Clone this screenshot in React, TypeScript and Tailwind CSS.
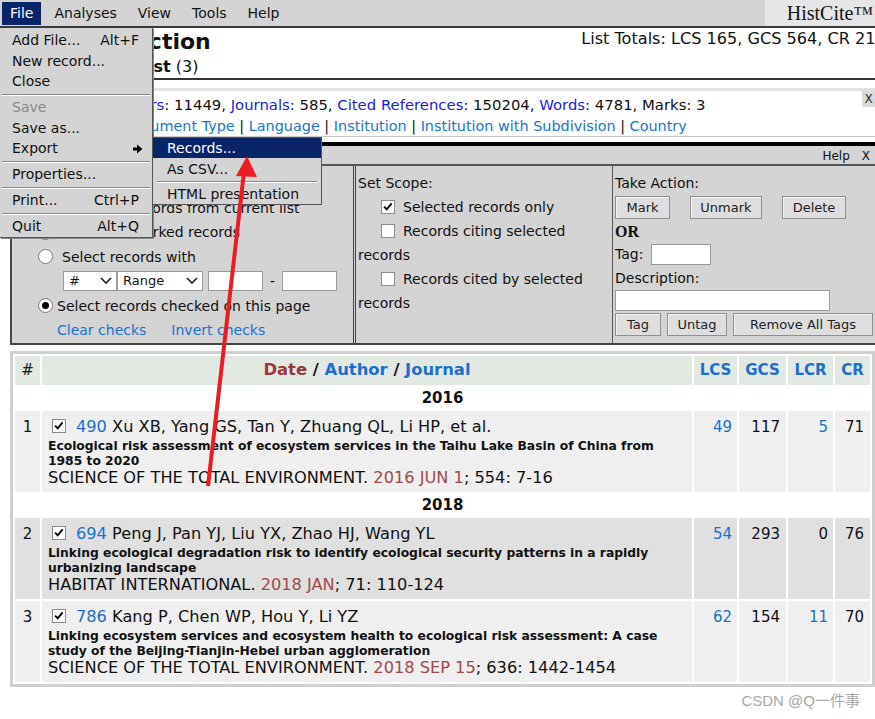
import React from "react";

type Rec = {
  n: number;
  id: string;
  authors: string;
  title: string[];
  journal: string;
  date: string;
  rest: string;
  lcs: string;
  gcs: string;
  lcr: string;
  lcrLink: boolean;
  cr: string;
  bg: string;
};

const years: { year: string; recs: Rec[] }[] = [
  {
    year: "2016",
    recs: [
      {
        n: 1,
        id: "490",
        authors: "Xu XB, Yang GS, Tan Y, Zhuang QL, Li HP, et al.",
        title: [
          "Ecological risk assessment of ecosystem services in the Taihu Lake Basin of China from",
          "1985 to 2020",
        ],
        journal: "SCIENCE OF THE TOTAL ENVIRONMENT.",
        date: "2016 JUN 1",
        rest: "; 554: 7-16",
        lcs: "49",
        gcs: "117",
        lcr: "5",
        lcrLink: true,
        cr: "71",
        bg: "bg-[#efefef]",
      },
    ],
  },
  {
    year: "2018",
    recs: [
      {
        n: 2,
        id: "694",
        authors: "Peng J, Pan YJ, Liu YX, Zhao HJ, Wang YL",
        title: [
          "Linking ecological degradation risk to identify ecological security patterns in a rapidly",
          "urbanizing landscape",
        ],
        journal: "HABITAT INTERNATIONAL.",
        date: "2018 JAN",
        rest: "; 71: 110-124",
        lcs: "54",
        gcs: "293",
        lcr: "0",
        lcrLink: false,
        cr: "76",
        bg: "bg-[#e0e0e0]",
      },
      {
        n: 3,
        id: "786",
        authors: "Kang P, Chen WP, Hou Y, Li YZ",
        title: [
          "Linking ecosystem services and ecosystem health to ecological risk assessment: A case",
          "study of the Beijing-Tianjin-Hebei urban agglomeration",
        ],
        journal: "SCIENCE OF THE TOTAL ENVIRONMENT.",
        date: "2018 SEP 15",
        rest: "; 636: 1442-1454",
        lcs: "62",
        gcs: "154",
        lcr: "11",
        lcrLink: true,
        cr: "70",
        bg: "bg-[#efefef]",
      },
    ],
  },
];

function Check({ checked = false }: { checked?: boolean }) {
  return (
    <span className="inline-flex h-[14px] w-[14px] shrink-0 items-center justify-center border border-[#8c8c8c] bg-white">
      {checked && (
        <svg viewBox="0 0 14 14" className="h-[12px] w-[12px]">
          <path d="M2.5 6.5 L5.5 9.8 L11.2 2.8" fill="none" stroke="#000" strokeWidth="2.2" />
        </svg>
      )}
    </span>
  );
}

function Radio({ checked = false }: { checked?: boolean }) {
  return (
    <span className="inline-flex h-[15px] w-[15px] shrink-0 items-center justify-center rounded-full border border-[#7a7a7a] bg-white">
      {checked && <span className="h-[7px] w-[7px] rounded-full bg-black" />}
    </span>
  );
}

function Btn({ children, w }: { children: React.ReactNode; w: string }) {
  return (
    <span
      className={`inline-flex h-[23px] items-center justify-center border border-[#8f8f8f] bg-[#dedede] text-[13px] text-[#222] shadow-[inset_1px_1px_0_#f4f4f4] ${w}`}
    >
      {children}
    </span>
  );
}

function Select({ label, w }: { label: string; w: string }) {
  return (
    <span className={`flex h-[20px] items-center justify-between border border-[#9a9a9a] bg-white pl-[5px] pr-[4px] text-[13px] ${w}`}>
      {label}
      <svg viewBox="0 0 12 8" className="h-[8px] w-[12px]">
        <path d="M1 1 L6 6 L11 1" fill="none" stroke="#222" strokeWidth="1.6" />
      </svg>
    </span>
  );
}

function MenuItem({ label, keys, dim, arrow }: { label: string; keys?: string; dim?: boolean; arrow?: boolean }) {
  return (
    <div className={`flex h-[20.5px] items-center justify-between pl-[12px] pr-[13px] ${dim ? "text-[#8a8a8a]" : "text-[#111]"}`}>
      <span>{label}</span>
      {keys && <span>{keys}</span>}
      {arrow && (
        <svg viewBox="0 0 10 10" className="-mr-[4px] h-[10px] w-[10px]">
          <path d="M0 3.5 H4 V0.5 L9.5 5 L4 9.5 V6.5 H0 Z" fill="#000" />
        </svg>
      )}
    </div>
  );
}

function Sep() {
  return <div className="mx-[2px] my-[1.75px] h-[2px] border-t border-b border-t-[#8a8a8a] border-b-white" />;
}

export default function App() {
  return (
    <div className="relative h-[719px] w-[875px] overflow-hidden bg-white font-['DejaVu_Sans',Verdana,sans-serif] text-[#111]">
      {/* menu bar */}
      <div className="flex h-[28px] border-b-2 border-[#3a3a3a] bg-[#d4d4d4] text-[14px]">
        <div className="flex items-center gap-[5px] pl-[2px]">
          <span className="flex h-[23px] items-center bg-[#0a246a] px-[8px] text-white">File</span>
          <span className="px-[8px]">Analyses</span>
          <span className="px-[8px]">View</span>
          <span className="px-[8px]">Tools</span>
          <span className="px-[8px]">Help</span>
        </div>
        <div className="ml-auto flex w-[110px] items-center justify-end bg-[#e6e6e6] pr-[2px] font-['Liberation_Serif',serif] text-[20px]">
          HistCite™
        </div>
      </div>

      {/* title */}
      <div className="flex h-[52px] justify-between border-b-2 border-[#333] pl-[20px]">
        <div>
          <div className="text-[22px] font-bold leading-[27px]">Main Collection</div>
          <div className="pl-[22px] pt-[2px] text-[16px] leading-[20px]">
            <span className="font-bold">Records in list</span> (3)
          </div>
        </div>
        <div className="-mr-[21px] text-[16.1px] leading-[20px] whitespace-nowrap pt-[1px]">List Totals: LCS 165, GCS 564, CR 2176</div>
      </div>
      <div className="h-[8px]" />
      <div className="h-[3px] bg-[#e2e2e2]" />

      {/* info box */}
      <div className="relative h-[46px] border-b border-[#c8c8c8] pt-[4px] leading-[20.5px] whitespace-nowrap">
        <div className="pl-[19px] text-[14.85px]">
          Records: 3, <span className="text-[#1c1cdc]">Authors</span>: 11449, <span className="text-[#1c1cdc]">Journals</span>: 585,{" "}
          <span className="text-[#1c1cdc]">Cited References</span>: 150204, <span className="text-[#1c1cdc]">Words</span>: 4781, Marks: 3
        </div>
        <div className="pl-[13.5px] text-[14.4px]">
          <span className="text-[#1a73d4]">Yearly output</span> | <span className="text-[#1a73d4]">Document Type</span> |{" "}
          <span className="text-[#1a73d4]">Language</span> | <span className="text-[#1a73d4]">Institution</span> |{" "}
          <span className="text-[#1a73d4]">Institution with Subdivision</span> | <span className="text-[#1a73d4]">Country</span>
        </div>
        <span className="absolute right-0 top-0 flex h-[16px] w-[13px] items-center justify-center bg-[#dadada] text-[12px] text-[#333]">
          X
        </span>
      </div>
      <div className="h-[5px]" />

      {/* selection panel */}
      <div className="ml-[10px]">
        <div className="h-[4px] bg-black" />
        <div className="flex h-[20px] items-center justify-end gap-[12px] border-b-2 border-[#555] bg-[#d4d4d4] pr-[5px] pt-[2px] text-[12px]">
          <span>Help</span>
          <span>X</span>
        </div>
        <div className="flex h-[179px] border-b-2 border-l-2 border-[#444] bg-[#d4d4d4] text-[14px]">
          {/* left column */}
          <div className="flex w-[341px] flex-col pl-[26px] pt-[5px] leading-[24.5px]">
            <div className="-ml-[24px]">Select Records:</div>
            <div className="flex items-center gap-[9px]">
              <Radio />
              <span>Select all records from current list</span>
            </div>
            <div className="flex items-center gap-[9px]">
              <Radio />
              <span>Select all marked records</span>
            </div>
            <div className="flex items-center gap-[9px]">
              <Radio />
              <span>Select records with</span>
            </div>
            <div className="flex h-[24.5px] items-center pl-[25px]">
              <Select label="#" w="w-[54px]" />
              <Select label="Range" w="w-[86px]" />
              <span className="ml-[5px] h-[20px] w-[55px] border border-[#9a9a9a] bg-white" />
              <span className="mx-[7px]">-</span>
              <span className="h-[20px] w-[55px] border border-[#9a9a9a] bg-white" />
            </div>
            <div className="flex items-center gap-[4px]">
              <Radio checked />
              <span>Select records checked on this page</span>
            </div>
            <div className="flex gap-[25px] pl-[19px] text-[#1a73d4]">
              <span>Clear checks</span>
              <span>Invert checks</span>
            </div>
          </div>
          {/* middle column */}
          <div className="w-[259px] border-l-[3px] border-double border-[#444] pl-[2px] pt-[5px] leading-[24px]">
            <div>Set Scope:</div>
            <div className="flex items-center gap-[8px] pl-[23px]">
              <Check checked />
              <span>Selected records only</span>
            </div>
            <div className="flex items-center gap-[8px] pl-[23px]">
              <Check />
              <span>Records citing selected</span>
            </div>
            <div>records</div>
            <div className="flex items-center gap-[8px] pl-[23px]">
              <Check />
              <span>Records cited by selected</span>
            </div>
            <div>records</div>
          </div>
          {/* right column */}
          <div className="flex-1 border-l border-[#555] pl-[2px] pt-[5px]">
            <div className="leading-[24px]">Take Action:</div>
            <div className="mt-[1px] flex">
              <Btn w="w-[55px]">Mark</Btn>
              <span className="w-[20px]" />
              <Btn w="w-[72px]">Unmark</Btn>
              <span className="w-[20px]" />
              <Btn w="w-[64px]">Delete</Btn>
            </div>
            <div className="mt-[2px] font-['Liberation_Serif',serif] text-[16px] font-bold leading-[22px]">OR</div>
            <div className="flex h-[23px] items-center gap-[8px]">
              <span>Tag:</span>
              <span className="h-[21px] w-[60px] border border-[#9a9a9a] bg-white" />
            </div>
            <div className="leading-[24px]">Description:</div>
            <div className="h-[21px] w-[215px] border border-[#9a9a9a] bg-white" />
            <div className="mt-[2px] flex gap-[6px]">
              <Btn w="w-[46px]">Tag</Btn>
              <Btn w="w-[60px]">Untag</Btn>
              <Btn w="w-[140px]">Remove All Tags</Btn>
            </div>
          </div>
        </div>
      </div>

      {/* records table */}
      <table className="ml-[10px] mt-[6px] w-[865px] table-fixed border-separate border-spacing-[2.5px] border-[3px] border-[#cfcfcf]">
        <colgroup>
          <col className="w-[25px]" />
          <col className="w-[650px]" />
          <col className="w-[43px]" />
          <col className="w-[47px]" />
          <col className="w-[45px]" />
          <col />
        </colgroup>
        <thead>
          <tr className="h-[29px] text-[15px] font-bold">
            <td className="bg-[#e2e8e2] text-center font-normal">#</td>
            <td className="bg-[#e2e8e2] text-center text-[16.4px]">
              <span className="text-[#993838]">Date</span> / <span className="text-[#1a6fd0]">Author</span> /{" "}
              <span className="text-[#1a6fd0]">Journal</span>
            </td>
            <td className="bg-[#e2e8e2] text-center text-[#1a6fd0]">LCS</td>
            <td className="bg-[#e2e8e2] text-center text-[#1a6fd0]">GCS</td>
            <td className="bg-[#e2e8e2] text-center text-[#1a6fd0]">LCR</td>
            <td className="bg-[#e2e8e2] text-center text-[#1a6fd0]">CR</td>
          </tr>
        </thead>
        <tbody>
          {years.map((y) => (
            <React.Fragment key={y.year}>
              <tr className="h-[22px]">
                <td colSpan={6} className="text-center text-[15px] font-bold leading-[22px]">
                  {y.year}
                </td>
              </tr>
              {y.recs.map((r) => (
                <tr key={r.id} className="text-[15px] leading-[20px]">
                  <td className={`${r.bg} pt-[6px] text-center align-top`}>{r.n}</td>
                  <td className={`${r.bg} pb-[5px] pl-[6px] pt-[6px] align-top text-[16.2px]`}>
                    <div className="flex h-[20px] items-center whitespace-nowrap">
                      <span className="ml-[4px] mr-[10px]">
                        <Check checked />
                      </span>
                      <span className="text-[#1a6fd0]">{r.id}</span>&nbsp;{r.authors}
                    </div>
                    <div className="mt-[2px] text-[12.3px] font-bold leading-[15px] whitespace-nowrap">
                      {r.title[0]}
                      <br />
                      {r.title[1]}
                    </div>
                    <div className="leading-[18px] whitespace-nowrap">
                      {r.journal} <span className="text-[#a04a4a]">{r.date}</span>
                      {r.rest}
                    </div>
                  </td>
                  <td className={`${r.bg} pr-[5px] pt-[6px] text-right align-top text-[#1a6fd0]`}>{r.lcs}</td>
                  <td className={`${r.bg} pr-[6px] pt-[6px] text-right align-top`}>{r.gcs}</td>
                  <td className={`${r.bg} pr-[5px] pt-[6px] text-right align-top ${r.lcrLink ? "text-[#1a6fd0]" : ""}`}>
                    {r.lcr}
                  </td>
                  <td className={`${r.bg} pr-[6px] pt-[6px] text-right align-top`}>{r.cr}</td>
                </tr>
              ))}
            </React.Fragment>
          ))}
        </tbody>
      </table>

      <div className="mt-[5px] pr-[15px] text-right font-['Liberation_Sans','Noto_Sans_CJK_SC',sans-serif] text-[15px] leading-[18px] text-[#a8a8a8]">
        CSDN @Q一件事
      </div>

      {/* File menu (open) */}
      <div className="absolute left-0 top-[28px] w-[153px] border-r border-b border-[#555] bg-[#d4d4d4] pt-[2.5px] text-[14px] shadow-[1px_1px_0_#888]">
        <MenuItem label="Add File..." keys="Alt+F" />
        <MenuItem label="New record..." />
        <MenuItem label="Close" />
        <Sep />
        <MenuItem label="Save" dim />
        <MenuItem label="Save as..." />
        <MenuItem label="Export" arrow />
        <Sep />
        <MenuItem label="Properties..." />
        <Sep />
        <MenuItem label="Print..." keys="Ctrl+P" />
        <Sep />
        <MenuItem label="Quit" keys="Alt+Q" />
      </div>

      {/* Export submenu */}
      <div className="absolute left-[152px] top-[137px] w-[170px] border border-[#555] bg-[#d4d4d4] text-[14px]">
        <div className="flex h-[20px] items-center bg-[#0a246a] pl-[14px] text-white">Records...</div>
        <div className="flex h-[22px] items-center pl-[14px]">As CSV...</div>
        <div className="mx-[4px] my-[1px] h-[2px] border-t border-b border-t-[#8a8a8a] border-b-white" />
        <div className="flex h-[20px] items-center pl-[14px]">HTML presentation</div>
      </div>

      {/* red annotation arrow */}
      <svg className="pointer-events-none absolute left-0 top-0" width="875" height="719" viewBox="0 0 875 719">
        <line x1="208" y1="486" x2="244" y2="172" stroke="#ec1c24" strokeWidth="4" />
        <polygon points="247,156 236,176 257,177" fill="#ec1c24" />
      </svg>
    </div>
  );
}
